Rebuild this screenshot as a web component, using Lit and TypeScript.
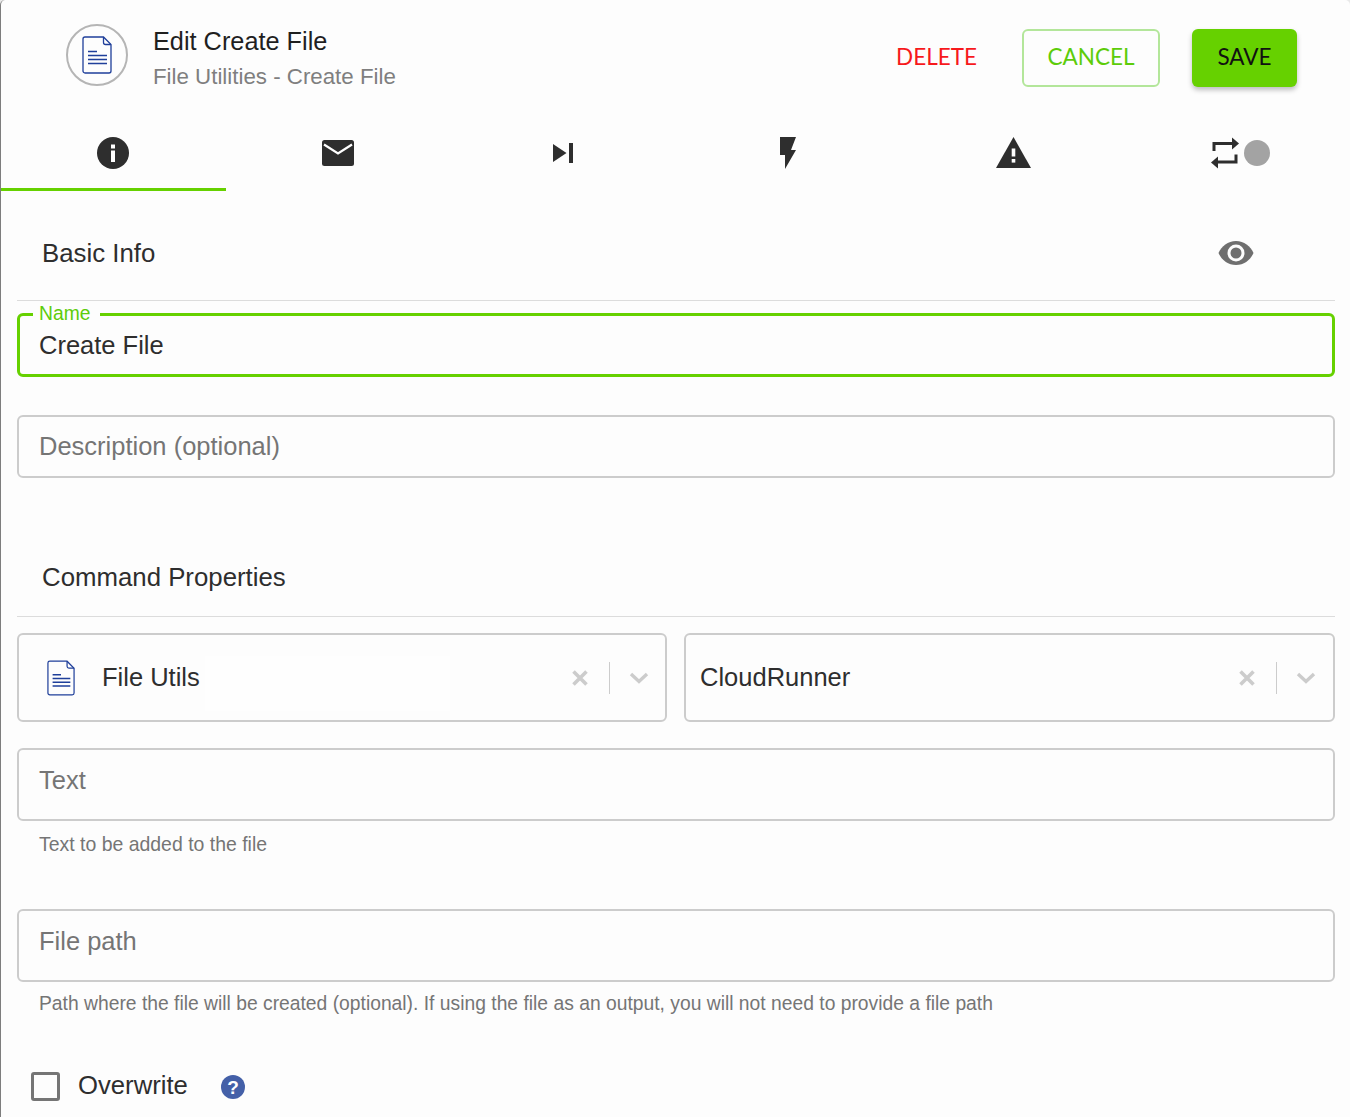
import { LitElement, html, css } from "lit";
import { customElement } from "lit/decorators.js";

const fileIcon = (w: number, h: number) => html`<svg width=${w} height=${h} viewBox="0 0 30 38" fill="none" stroke="#1f3f9a" stroke-width="1.3">
  <path d="M3 1h18.500L29 8.500V35a2 2 0 0 1-2 2H3a2 2 0 0 1-2-2V3a2 2 0 0 1 2-2z"/>
  <path d="M21.500 1v5.500a2 2 0 0 0 2 2H29"/>
  <path d="M6 15.500h9M6 19.500h19M6 23.500h19M6 27.500h19" stroke-width="1.500"/>
</svg>`;

const clearIcon = html`<svg width="16" height="16" viewBox="0 0 16 16"><path d="M1.500 1.500l13 13M14.500 1.500l-13 13" stroke="#cccccc" stroke-width="3.600" fill="none"/></svg>`;
const chevIcon = html`<svg width="20" height="12" viewBox="0 0 20 12"><path d="M2 2l8 7.500L18 2" stroke="#cccccc" stroke-width="3.400" fill="none"/></svg>`;

@customElement("app-root")
export class AppRoot extends LitElement {
  static styles = css`
    :host { display: block; width: 1350px; height: 1117px; overflow: hidden; background: #e9e9e9; font-family: "Liberation Sans", Arial, sans-serif; color: #2e2e2e; }
    .panel { box-sizing: border-box; height: 1117px; background: #fdfdfd; border-left: 1px solid #7d7d7d; border-top-left-radius: 5px; border-top-right-radius: 5px; display: flex; flex-direction: column; }
    .header { height: 115px; flex: none; display: flex; align-items: flex-start; padding-left: 65px; padding-right: 53px; }
    .logo { box-sizing: border-box; width: 62px; height: 62px; margin-top: 24px; border-radius: 50%; border: 2px solid #b5b5b5; display: flex; align-items: center; justify-content: center; flex: none; }
    .titles { margin-left: 25px; margin-top: 25px; }
    .title { font-size: 25.300px; line-height: 32px; color: #1f1f1f; }
    .sub { font-size: 22.300px; line-height: 26px; margin-top: 7px; color: #7f7f7f; }
    .actions { margin-left: auto; margin-top: 29px; display: flex; align-items: center; font-family: Lato, sans-serif; font-size: 22.500px; }
    .delete { color: #f7191c; margin-right: 45px; padding-bottom: 4px; }
    .btn { box-sizing: border-box; height: 58px; padding-bottom: 4px; display: flex; align-items: center; justify-content: center; border-radius: 6px; }
    .cancel { width: 138px; border: 2px solid #b3e69a; color: #5dcc0a; margin-right: 32px; }
    .save { width: 105px; background: #66d100; color: #111; box-shadow: 0 3px 5px rgba(0,0,0,.25); }
    .tabs { display: flex; height: 76px; flex: none; }
    .tab { box-sizing: border-box; width: 225px; padding-bottom: 1px; display: flex; align-items: center; justify-content: center; }
    .tab.active { border-bottom: 3px solid #66d100; padding-bottom: 0; padding-top: 2px; }
    .tab.rep { padding-left: 5px; }
    .tab.warn { padding-left: 2px; }
    .tab .dot { width: 26px; height: 26px; border-radius: 50%; background: #a3a3a3; margin-left: 5px; }
    .body { padding: 0 15px 0 16px; display: flex; flex-direction: column; }
    .section { box-sizing: border-box; display: flex; align-items: center; justify-content: space-between; border-bottom: 1px solid #dcdcdc; padding-left: 25px; font-size: 25.800px; color: #2e2e2e; }
    .s1 { height: 110px; padding-top: 15px; padding-right: 81px; }
    .s2 { height: 139px; padding-top: 60px; }
    .field { box-sizing: border-box; border: 2px solid #cccccc; border-radius: 6px; padding-left: 20px; display: flex; font-size: 25.500px; color: #757575; position: relative; }
    .name { height: 64px; margin-top: 12px; border: 3px solid #66d100; color: #2e2e2e; align-items: center; padding-left: 19px; }
    .name .legend { position: absolute; left: 13px; top: -13px; padding: 0 10px 0 6px; background: #fdfdfd; color: #5dcc0a; font-size: 19.300px; line-height: 22px; }
    .desc { height: 63px; margin-top: 38px; align-items: center; }
    .tall { height: 73px; align-items: flex-start; padding-top: 14px; line-height: 32px; }
    .help { font-size: 19.300px; line-height: 24px; color: #757575; padding-left: 22px; margin-top: 10px; }
    .help.first { font-size: 19.450px; margin-top: 11px; }
    .selects { display: grid; grid-template-columns: 650px 651px; gap: 17px; margin-top: 16px; margin-bottom: 26px; }
    .select { box-sizing: border-box; height: 89px; border: 2px solid #cccccc; border-radius: 6px; display: flex; align-items: center; font-size: 25.500px; color: #2e2e2e; padding-right: 17px; }
    .select.left { padding-right: 16px; }
    .select .ic { margin-left: 28px; margin-right: 27px; display: flex; }
    .select .txt { margin-left: 14px; }
    .select .grow { flex: 1; }
    .select .patch { width: 245px; height: 55px; margin: 11px 0 0 5px; background: #fefefe; }
    .select .sep { width: 1px; height: 32px; background: #cccccc; margin: 0 19px 0 21px; }
    .check { display: flex; align-items: center; margin-top: 55px; padding-left: 14px; font-size: 25.700px; }
    .box { box-sizing: border-box; width: 29px; height: 29px; border: 3px solid #757575; border-radius: 3px; }
    .check .lbl { margin-left: 18px; margin-bottom: 2px; }
    .q { margin-left: 33px; display: flex; }
    .mt2 { margin-top: 53px; }
  `;

  render() {
    return html`<div class="panel">
      <div class="header">
        <div class="logo">${fileIcon(30, 38)}</div>
        <div class="titles">
          <div class="title">Edit Create File</div>
          <div class="sub">File Utilities - Create File</div>
        </div>
        <div class="actions">
          <span class="delete">DELETE</span>
          <div class="btn cancel">CANCEL</div>
          <div class="btn save">SAVE</div>
        </div>
      </div>
      <div class="tabs">
        <div class="tab active"><svg width="32" height="32" viewBox="0 0 32 32"><circle cx="16" cy="16" r="16" fill="#2e2e2e"/><rect x="14" y="13.500" width="4" height="11.500" fill="#fff"/><rect x="14" y="7.500" width="4" height="4" fill="#fff"/></svg></div>
        <div class="tab"><svg width="32" height="26" viewBox="0 0 32 26"><rect width="32" height="26" rx="2.500" fill="#2e2e2e"/><path d="M2 4.500L16 13.500L30 4.500" stroke="#fff" stroke-width="2.200" fill="none"/></svg></div>
        <div class="tab"><svg width="20" height="20" viewBox="0 0 20 20"><path d="M0 1l13.500 9L0 19z M16 0h4v20h-4z" fill="#2e2e2e"/></svg></div>
        <div class="tab"><svg width="16" height="32" viewBox="0 0 16 32"><path d="M0 0h16l-5 13h5L5 32V18H0z" fill="#2e2e2e"/></svg></div>
        <div class="tab warn"><svg width="35" height="31" viewBox="0 0 35 31"><path d="M17.500 0L35 31H0z" fill="#2e2e2e"/><rect x="15.700" y="11.500" width="3.600" height="8" fill="#fff"/><rect x="15.700" y="22" width="3.600" height="3.600" fill="#fff"/></svg></div>
        <div class="tab rep"><svg width="28" height="32" viewBox="0 0 28 32" fill="none"><path d="M3 14V6.500h19" stroke="#2e2e2e" stroke-width="3"/><path d="M21 0.500l7 6-7 6z" fill="#2e2e2e"/><path d="M25 17.500V25H6" stroke="#2e2e2e" stroke-width="3"/><path d="M7 19.500l-7 6 7 6z" fill="#2e2e2e"/></svg><span class="dot"></span></div>
      </div>
      <div class="body">
        <div class="section s1"><span>Basic Info</span>
          <svg width="36" height="26" viewBox="0 0 36 26"><path d="M18 1C10 1 3.500 6 0.500 13C3.500 20 10 25 18 25S32.500 20 35.500 13C32.500 6 26 1 18 1z" fill="#6f6f6f"/><circle cx="18" cy="13" r="8.500" fill="#fdfdfd"/><circle cx="18" cy="13" r="5.500" fill="#6f6f6f"/></svg>
        </div>
        <div class="field name"><span class="legend">Name</span><span>Create File</span></div>
        <div class="field desc"><span>Description (optional)</span></div>
        <div class="section s2"><span>Command Properties</span></div>
        <div class="selects">
          <div class="select left"><span class="ic">${fileIcon(28, 36)}</span><span>File Utils</span><span class="patch"></span><span class="grow"></span>${clearIcon}<span class="sep"></span>${chevIcon}</div>
          <div class="select"><span class="txt">CloudRunner</span><span class="grow"></span>${clearIcon}<span class="sep"></span>${chevIcon}</div>
        </div>
        <div class="field tall"><span>Text</span></div>
        <div class="help first">Text to be added to the file</div>
        <div class="field tall mt2"><span>File path</span></div>
        <div class="help">Path where the file will be created (optional). If using the file as an output, you will not need to provide a file path</div>
        <div class="check"><span class="box"></span><span class="lbl">Overwrite</span>
          <span class="q"><svg width="24" height="24" viewBox="0 0 24 24"><circle cx="12" cy="12" r="12" fill="#4460a8"/><text x="12" y="19" text-anchor="middle" font-family="Liberation Sans, sans-serif" font-weight="700" font-size="19" fill="#fff">?</text></svg></span>
        </div>
      </div>
    </div>`;
  }
}
